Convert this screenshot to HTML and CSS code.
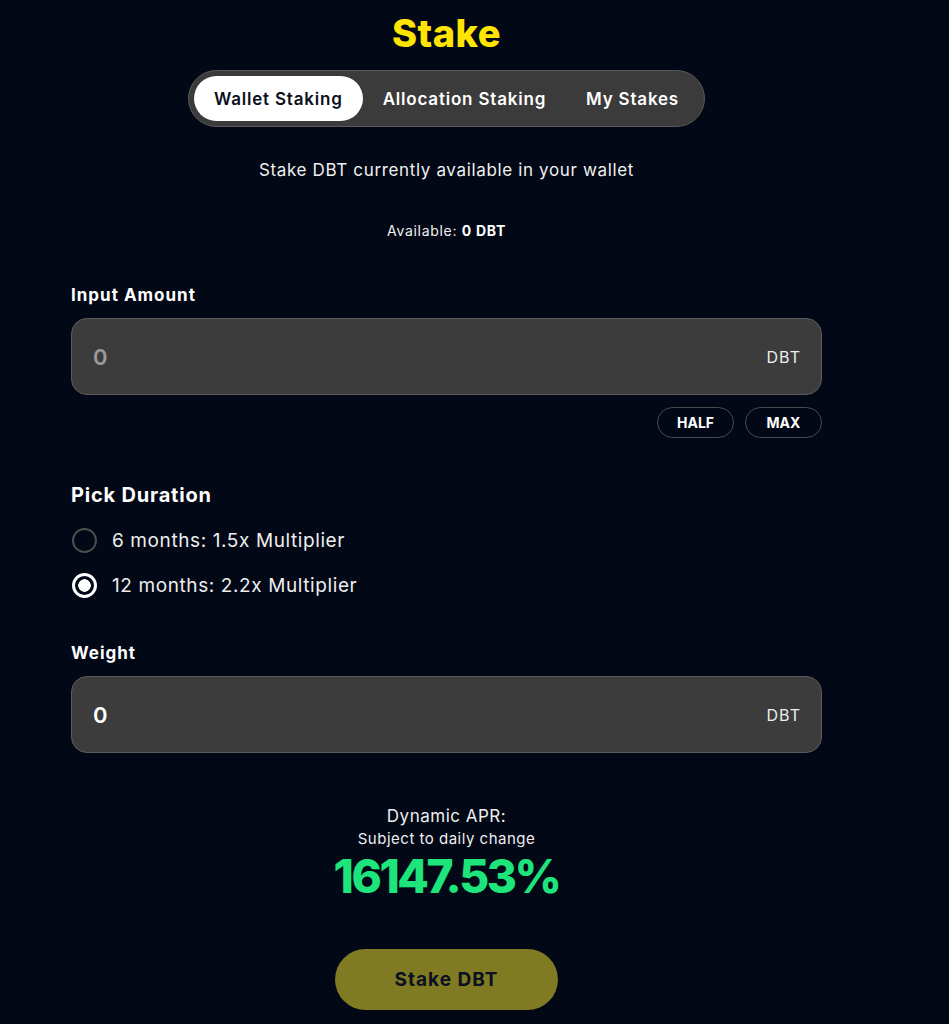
FILE: index.html
```html
<!DOCTYPE html>
<html>
<head>
<meta charset="utf-8">
<link rel="stylesheet" href="styles.css">
</head>
<body>
<div class="page">
  <h1 class="title">Stake</h1>
  <div class="tabs-row">
    <div class="tabs">
      <div class="tab active">Wallet Staking</div>
      <div class="tab">Allocation Staking</div>
      <div class="tab">My Stakes</div>
    </div>
  </div>
  <p class="subtitle">Stake DBT currently available in your wallet</p>
  <p class="available">Available: <b>0 DBT</b></p>

  <div class="label">Input Amount</div>
  <div class="field">
    <span class="value placeholder">0</span>
    <span class="unit">DBT</span>
  </div>
  <div class="quick">
    <button class="chip">HALF</button>
    <button class="chip">MAX</button>
  </div>

  <div class="label duration">Pick Duration</div>
  <div class="radios">
    <div class="radio-row"><span class="radio"></span><span class="radio-text">6 months: 1.5x Multiplier</span></div>
    <div class="radio-row"><span class="radio checked"></span><span class="radio-text">12 months: 2.2x Multiplier</span></div>
  </div>

  <div class="label weight">Weight</div>
  <div class="field">
    <span class="value">0</span>
    <span class="unit">DBT</span>
  </div>

  <div class="apr">
    <div class="apr-title">Dynamic APR:</div>
    <div class="apr-sub">Subject to daily change</div>
    <div class="apr-value">16147.53%</div>
  </div>

  <div class="action">
    <button class="stake-btn">Stake DBT</button>
  </div>
</div>
</body>
</html>
```
FILE: styles.css
```css
* { box-sizing: border-box; }
html, body { margin: 0; padding: 0; }
body {
  background: #020816;
  color: #ffffff;
  font-family: "Inter", "Liberation Sans", sans-serif;
  height: 1024px;
  overflow: hidden;
}
.page {
  width: 751px;
  margin-left: 71px;
  display: flex;
  flex-direction: column;
}
.title {
  margin: 9px 0 0;
  text-align: center;
  color: #ffe500;
  font-size: 38px;
  font-weight: 800;
  line-height: 48px;
  letter-spacing: 0.5px;
}
.tabs-row { display: flex; justify-content: center; margin-top: 13px; }
.tabs {
  display: flex;
  align-items: center;
  gap: 0;
  background: #3b3b3b;
  border: 1px solid #5a5a5a;
  border-radius: 29px;
  padding: 5px;
  height: 57px;
}
.tab {
  height: 45px;
  display: flex;
  align-items: center;
  padding: 0 20px;
  border-radius: 23px;
  font-size: 17px;
  font-weight: 600;
  color: #ffffff;
  letter-spacing: 0.8px;
}
.tab.active { background: #ffffff; color: #0b1020; }
.subtitle {
  margin: 32px 0 0;
  text-align: center;
  font-size: 17px;
  line-height: 22px;
  color: #f0f0f0;
  letter-spacing: 0.65px;
}
.available {
  margin: 40px 0 0;
  text-align: center;
  font-size: 14px;
  line-height: 20px;
  color: #f0f0f0;
  letter-spacing: 0.7px;
}
.available b { font-weight: 700; color: #fff; }
.label {
  margin-top: 42px;
  font-size: 17px;
  font-weight: 700;
  line-height: 24px;
  letter-spacing: 1px;
}
.field {
  margin-top: 11px;
  height: 77px;
  background: #3c3c3c;
  border: 1px solid #5c5c5c;
  border-radius: 16px;
  display: flex;
  align-items: center;
  justify-content: space-between;
  padding: 0 20px 0 21px;
}
.value { font-size: 22px; font-weight: 600; color: #ffffff; }
.value.placeholder { color: #9a9a9a; }
.unit {
  font-family: "Inter", "Liberation Sans", sans-serif;
  font-size: 16px;
  color: #eeeeee;
  letter-spacing: 1px;
}
.quick {
  display: flex;
  justify-content: flex-end;
  gap: 11px;
  margin-top: 12px;
}
.chip {
  height: 31px;
  width: 77px;
  border-radius: 16px;
  background: transparent;
  border: 1px solid #4a4a4a;
  color: #ffffff;
  font-family: inherit;
  font-size: 14px;
  font-weight: 700;
}
.label.duration { margin-top: 45px; font-size: 20px; letter-spacing: 0.8px; line-height: 25px; }
.radios { display: flex; flex-direction: column; gap: 21px; margin-top: 20px; }
.radio-row { display: flex; align-items: center; gap: 15px; height: 24px; }
.radio {
  width: 25px; height: 25px;
  border-radius: 50%;
  border: 2px solid #4e4e4e;
  margin-left: 1px;
}
.radio.checked {
  border: 3px solid #ffffff;
  background: radial-gradient(circle, #ffffff 0 6px, #020816 6.5px);
}
.radio-text { font-size: 19px; color: #eeeeee; letter-spacing: 0.6px; }
.label.weight { margin-top: 44px; }
.apr { margin-top: 51px; text-align: center; }
.apr-title { font-size: 17px; line-height: 24px; color: #eeeeee; letter-spacing: 0.5px; }
.apr-sub { font-size: 15px; line-height: 18px; color: #eeeeee; letter-spacing: 0.5px; margin-top: 2px; }
.apr-value {
  font-size: 46px;
  font-weight: 800;
  line-height: 56px;
  color: #1de57c;
  letter-spacing: -2.4px;
}
.action { display: flex; justify-content: center; margin-top: 45px; }
.stake-btn {
  width: 223px;
  height: 61px;
  border-radius: 31px;
  border: none;
  background: #807a22;
  color: #0b1020;
  font-family: inherit;
  font-size: 19px;
  font-weight: 700;
  letter-spacing: 1px;
}
```
